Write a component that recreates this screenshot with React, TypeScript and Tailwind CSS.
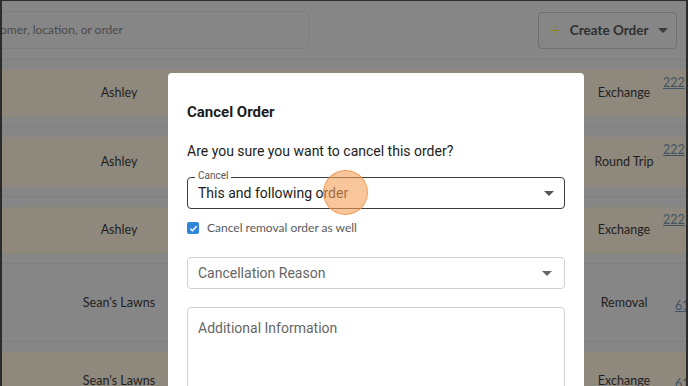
import React from 'react';

// 배경 테이블 행 데이터
const rows = [
  { name: 'Ashley', type: 'Exchange', link: '222', tan: true, h: 'h-[67px]' },
  { name: 'Ashley', type: 'Round Trip', link: '222', tan: true, h: 'h-[70px]' },
  { name: 'Ashley', type: 'Exchange', link: '222', tan: true, h: 'h-[67px]' },
  { name: "Sean's Lawns", type: 'Removal', link: '61', tan: false, h: 'h-[78px]' },
  { name: "Sean's Lawns", type: 'Exchange', link: '61', tan: true, h: 'h-[78px]' },
];

function Caret({ className = '' }: { className?: string }) {
  return (
    <svg className={className} width="10" height="5" viewBox="0 0 10 5">
      <path d="M0 0h10L5 5z" fill="currentColor" />
    </svg>
  );
}

export default function App() {
  return (
    <div className="relative w-[688px] h-[386px] overflow-hidden bg-[#868687] border-l-2 border-t border-r-2 border-[#2b2b2b] font-['Lato',sans-serif]">
      {/* 상단 바 */}
      <div className="flex items-center justify-between h-[59px] border-b border-[#7f7f80] pr-[9px]">
        <div className="-ml-[60px] w-[367px] h-[38px] border border-[#7d7d7d] rounded-[4px] flex items-center pl-[57px] text-[12px] text-[#4a4a4a]">
          omer, location, or order
        </div>
        <div className="w-[139px] h-[37px] border border-[#6f6f6f] rounded-[4px] flex items-center pl-[10px] pr-[8px] text-[#2f2f2f]">
          <span className="text-[#8a8430] text-[22px] leading-none font-light">+</span>
          <span className="ml-[8px] text-[13.5px] font-bold">Create Order</span>
          <Caret className="ml-auto text-[#3a3a3a]" />
        </div>
      </div>

      {/* 테이블 행 */}
      {rows.map((r, i) => (
        <div key={i} className={`${r.h} border-b border-[#7f7f80] pt-[10px] pb-[9px]`}>
          <div className={`h-full flex items-center text-[12.5px] text-[#1f1f1f] ${r.tan ? 'bg-[#8f887c]' : ''}`}>
            <div className="w-[234px] text-center">{r.name}</div>
            <div className="ml-auto w-[80px] pl-[4px] text-center">{r.type}</div>
            <div className={`w-[24px] text-[#3f5566] underline self-start ${r.link === '222' ? 'mt-[4px] pl-[1px]' : 'mt-[23px] pl-[13px]'}`}>{r.link}</div>
          </div>
        </div>
      ))}

      {/* 모달 */}
      <div className="absolute left-[166px] top-[72px] w-[416px] h-[330px] bg-white rounded-[4px] px-[19px] pt-[30px] font-['Roboto',sans-serif] text-[#1c1c1c]">
        <h2 className="text-[15px] font-bold leading-[18px]">Cancel Order</h2>
        <p className="mt-[22px] text-[14px] leading-[16px]">Are you sure you want to cancel this order?</p>

        <div className="relative mt-[18px] h-[32px] border border-[#3a3a3a] rounded-[4px] flex items-center pl-[10px] pr-[10px]">
          <span className="absolute -top-[8px] left-[7px] bg-white px-[3px] text-[10px] leading-[12px] text-[#555]">Cancel</span>
          <span className="text-[14px]">This and following order</span>
          <Caret className="ml-auto text-[#555]" />
          <span className="absolute left-[135px] top-[-8px] w-[45px] h-[45px] rounded-full bg-[#f5a05a]/60 border border-[#f08a3c]/70"></span>
        </div>

        <label className="mt-[10px] flex items-center gap-[8px] font-['Lato',sans-serif] text-[12px] text-[#5a5a5a]">
          <span className="w-[12px] h-[12px] rounded-[2px] bg-[#2f86d8] flex items-center justify-center">
            <svg width="9" height="9" viewBox="0 0 10 10">
              <path d="M1.5 5.2l2.3 2.3 4.7-5" stroke="white" strokeWidth="1.6" fill="none" />
            </svg>
          </span>
          Cancel removal order as well
        </label>

        <div className="mt-[20px] h-[32px] border border-[#d0d0d0] rounded-[4px] flex items-center pl-[10px] pr-[12px]">
          <span className="text-[14px] text-[#666]">Cancellation Reason</span>
          <Caret className="ml-auto text-[#666]" />
        </div>

        <div className="mt-[18px] h-[100px] border border-[#d0d0d0] rounded-[4px] pl-[10px] pt-[8px]">
          <span className="text-[14px] text-[#666]">Additional Information</span>
        </div>
      </div>
    </div>
  );
}
